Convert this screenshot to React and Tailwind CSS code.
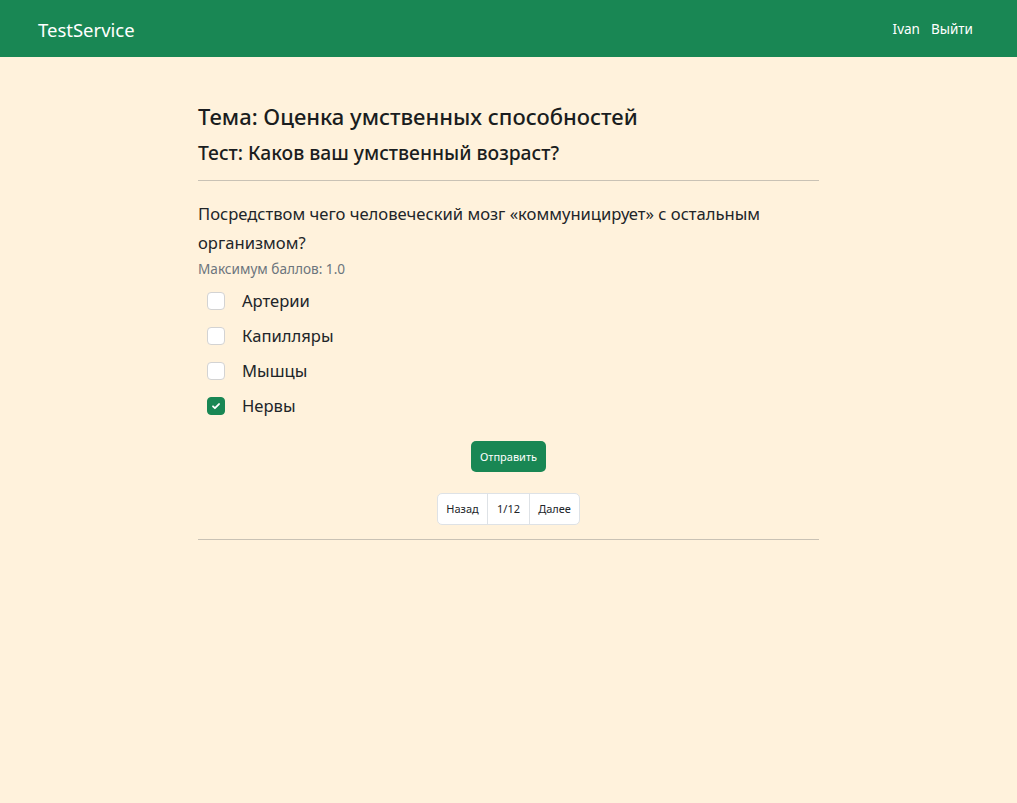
import React, { useState } from 'react'

const answers = ['Артерии', 'Капилляры', 'Мышцы', 'Нервы']

function CheckBox({ checked }) {
  return (
    <span
      className={
        'flex h-[18px] w-[18px] shrink-0 items-center justify-center rounded-[4px] border ' +
        (checked ? 'border-[#198754] bg-[#198754]' : 'border-[#d3d3d3] bg-white')
      }
    >
      {checked && (
        <svg width="12" height="12" viewBox="0 0 20 20">
          <path d="M5 10.5l3.2 3.2 6.8-7" fill="none" stroke="#fff" strokeWidth="3" strokeLinecap="round" strokeLinejoin="round" />
        </svg>
      )}
    </span>
  )
}

export default function App() {
  const [picked, setPicked] = useState([false, false, false, true])

  const toggle = (i) => {
    const next = [...picked]
    next[i] = !next[i]
    setPicked(next)
  }

  return (
    <div className="min-h-[803px] bg-[#fff2dc] font-['Noto_Sans',sans-serif] text-[#212529]">
      <nav className="flex h-[57px] items-center justify-between bg-[#198754] pl-[38px] pr-[44px] text-white">
        <span className="pt-[2px] text-[18.5px]">TestService</span>
        <div className="flex gap-[11px] pt-[2px] text-[13.5px]">
          <a>Ivan</a>
          <a>Выйти</a>
        </div>
      </nav>

      <main className="mx-auto w-[621px] pt-[42px]">
        <h3 className="text-[22px] font-medium leading-[34px] text-[#1a1d20]">Тема: Оценка умственных способностей</h3>
        <h4 className="mt-[5px] text-[19.3px] font-medium leading-[30px] text-[#1a1d20]">Тест: Каков ваш умственный возраст?</h4>
        <hr className="mt-[12px] border-t border-[#c9c2b5]" />

        <p className="mt-[18px] text-[16.6px] leading-[29px]">
          Посредством чего человеческий мозг «коммуницирует» с остальным организмом?
        </p>
        <p className="mt-[2px] text-[13.6px] text-[#6c757d]">Максимум баллов: 1.0</p>

        <div className="mt-[11px] flex flex-col gap-[13px] pl-[9px]">
          {answers.map((a, i) => (
            <label key={a} className="flex cursor-pointer items-center gap-[17px] text-[16.6px] leading-[22px]" onClick={() => toggle(i)}>
              <CheckBox checked={picked[i]} />
              <span>{a}</span>
            </label>
          ))}
        </div>

        <div className="mt-[24px] flex justify-center">
          <button className="h-[31px] rounded-[5px] bg-[#198754] px-[9px] text-[11px] text-white">Отправить</button>
        </div>

        <div className="mt-[21px] flex justify-center">
          <div className="flex h-[32px] overflow-hidden rounded-[5px] border border-[#dee2e6] bg-white text-[11px]">
            <button className="w-[50px] border-r border-[#dee2e6]">Назад</button>
            <span className="flex w-[42px] items-center justify-center border-r border-[#dee2e6]">1/12</span>
            <button className="w-[49px]">Далее</button>
          </div>
        </div>

        <hr className="mt-[14px] border-t border-[#c9c2b5]" />
      </main>
    </div>
  )
}
